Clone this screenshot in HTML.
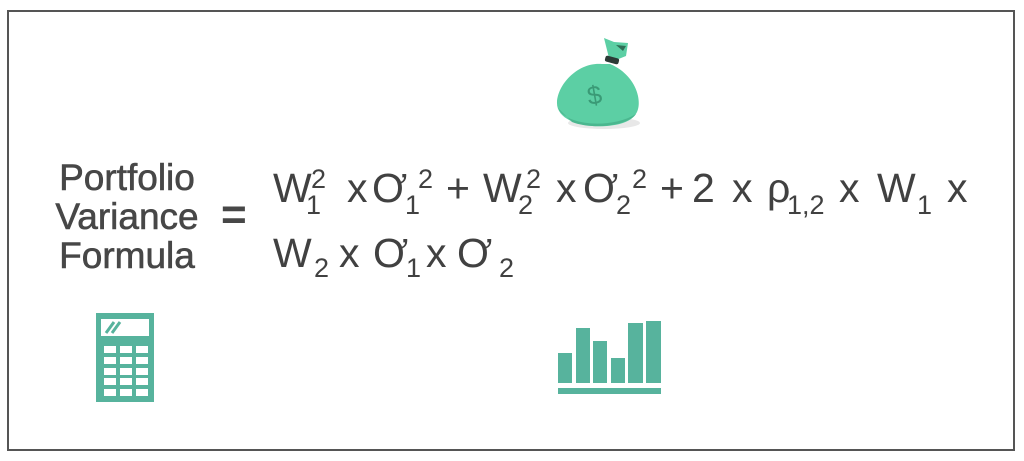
<!DOCTYPE html>
<html><head><meta charset="utf-8"><style>
body{margin:0;width:1024px;height:461px;background:#fff;position:relative;overflow:hidden;font-family:"Liberation Sans",sans-serif;color:#414141}
.frame{position:absolute;left:7px;top:10px;width:1008px;height:441px;border:2px solid #555;box-sizing:border-box}
.lbl{position:absolute;left:17px;top:158px;width:220px;text-align:center;font-size:37px;line-height:39px;color:#474747;-webkit-text-stroke:0.6px #474747}
.eq{position:absolute;left:221px;top:190px;font-size:44px;font-weight:bold;color:#474747}
.t{position:absolute;white-space:nowrap;font-size:41px;line-height:41px}
.s{position:absolute;white-space:nowrap;font-size:27px;line-height:27px}
</style></head><body>
<div class="frame"></div>
<svg style="position:absolute;left:552px;top:32px" width="96" height="100" viewBox="0 0 96 100">
<ellipse cx="52" cy="91" rx="36" ry="6" fill="#e8e8e8"/>
<path d="M50 32 C26 30 6 52 5 70 C4 88 30 96 55 94 C78 92 90 84 86 64 C82 46 68 36 58 32Z" fill="#5ccfa4"/>
<path d="M6 76 C14 94 60 97 84 82 C76 94 40 98 20 90Z" fill="#4bb78f"/>
<path d="M52 6 L62 10 L76 11 L74 24 L64 28 L57 26 Z" fill="#5ccfa4"/>
<path d="M64 13 L74 14 L71 19 Z" fill="#2f6e56"/>
<rect x="53" y="25" width="14" height="6" rx="2" fill="#2c3a36" transform="rotate(15 60 28)"/>
<text x="35" y="72" font-family="Liberation Sans" font-size="26" fill="#3a9a76" transform="rotate(-10 42 62)">$</text>
</svg>
<div class="lbl">Portfolio<br>Variance<br>Formula</div>
<div class="eq">=</div>

<span class="t" style="left:273px;top:168px">W</span>
<span class="s" style="left:306px;top:192px">1</span>
<span class="s" style="left:311px;top:166px">2</span>
<span class="t" style="left:347px;top:168px">x</span>
<span class="t" style="left:372px;top:168px">Ơ</span>
<span class="s" style="left:405px;top:192px">1</span>
<span class="s" style="left:418px;top:166px">2</span>
<span class="t" style="left:446px;top:168px">+</span>
<span class="t" style="left:483px;top:168px">W</span>
<span class="s" style="left:518px;top:192px">2</span>
<span class="s" style="left:526px;top:166px">2</span>
<span class="t" style="left:556px;top:168px">x</span>
<span class="t" style="left:583px;top:168px">Ơ</span>
<span class="s" style="left:616px;top:192px">2</span>
<span class="s" style="left:632px;top:166px">2</span>
<span class="t" style="left:660px;top:168px">+</span>
<span class="t" style="left:692px;top:168px">2</span>
<span class="t" style="left:732px;top:168px">x</span>
<span class="t" style="left:767px;top:168px">ρ</span>
<span class="s" style="left:787px;top:192px">1,2</span>
<span class="t" style="left:839px;top:168px">x</span>
<span class="t" style="left:877px;top:168px">W</span>
<span class="s" style="left:917px;top:192px">1</span>
<span class="t" style="left:947px;top:168px">x</span>

<span class="t" style="left:273px;top:233px">W</span>
<span class="s" style="left:314px;top:255px">2</span>
<span class="t" style="left:339px;top:233px">x</span>
<span class="t" style="left:373px;top:233px">Ơ</span>
<span class="s" style="left:406px;top:255px">1</span>
<span class="t" style="left:426px;top:233px">x</span>
<span class="t" style="left:457px;top:233px">Ơ</span>
<span class="s" style="left:499px;top:255px">2</span>

<svg style="position:absolute;left:96px;top:313px" width="58" height="89" viewBox="0 0 58 89">
<rect width="58" height="89" fill="#57b39d"/>
<rect x="5" y="6" width="48" height="17" fill="#fff"/>
<path d="M10 20 L18 9 M16 20 L24 9" stroke="#57b39d" stroke-width="3"/>
<g fill="#fff">
<rect x="8" y="33" width="12" height="7"/><rect x="24" y="33" width="12" height="7"/><rect x="40" y="33" width="12" height="7"/>
<rect x="8" y="44" width="12" height="7"/><rect x="24" y="44" width="12" height="7"/><rect x="40" y="44" width="12" height="7"/>
<rect x="8" y="55" width="12" height="7"/><rect x="24" y="55" width="12" height="7"/><rect x="40" y="55" width="12" height="7"/>
<rect x="8" y="65" width="12" height="7"/><rect x="24" y="65" width="12" height="7"/><rect x="40" y="65" width="12" height="7"/>
<rect x="8" y="76" width="12" height="7"/><rect x="24" y="76" width="12" height="7"/><rect x="40" y="76" width="12" height="7"/>
</g></svg>
<svg style="position:absolute;left:557px;top:318px" width="106" height="80">
<g fill="#57b39d">
<rect x="1" y="35" width="14" height="30"/><rect x="19" y="10" width="14" height="55"/><rect x="36" y="23" width="14" height="42"/>
<rect x="54" y="40" width="14" height="25"/><rect x="71" y="5" width="15" height="60"/><rect x="89" y="3" width="15" height="62"/>
<rect x="1" y="70" width="103" height="6"/></g></svg>
</body></html>
